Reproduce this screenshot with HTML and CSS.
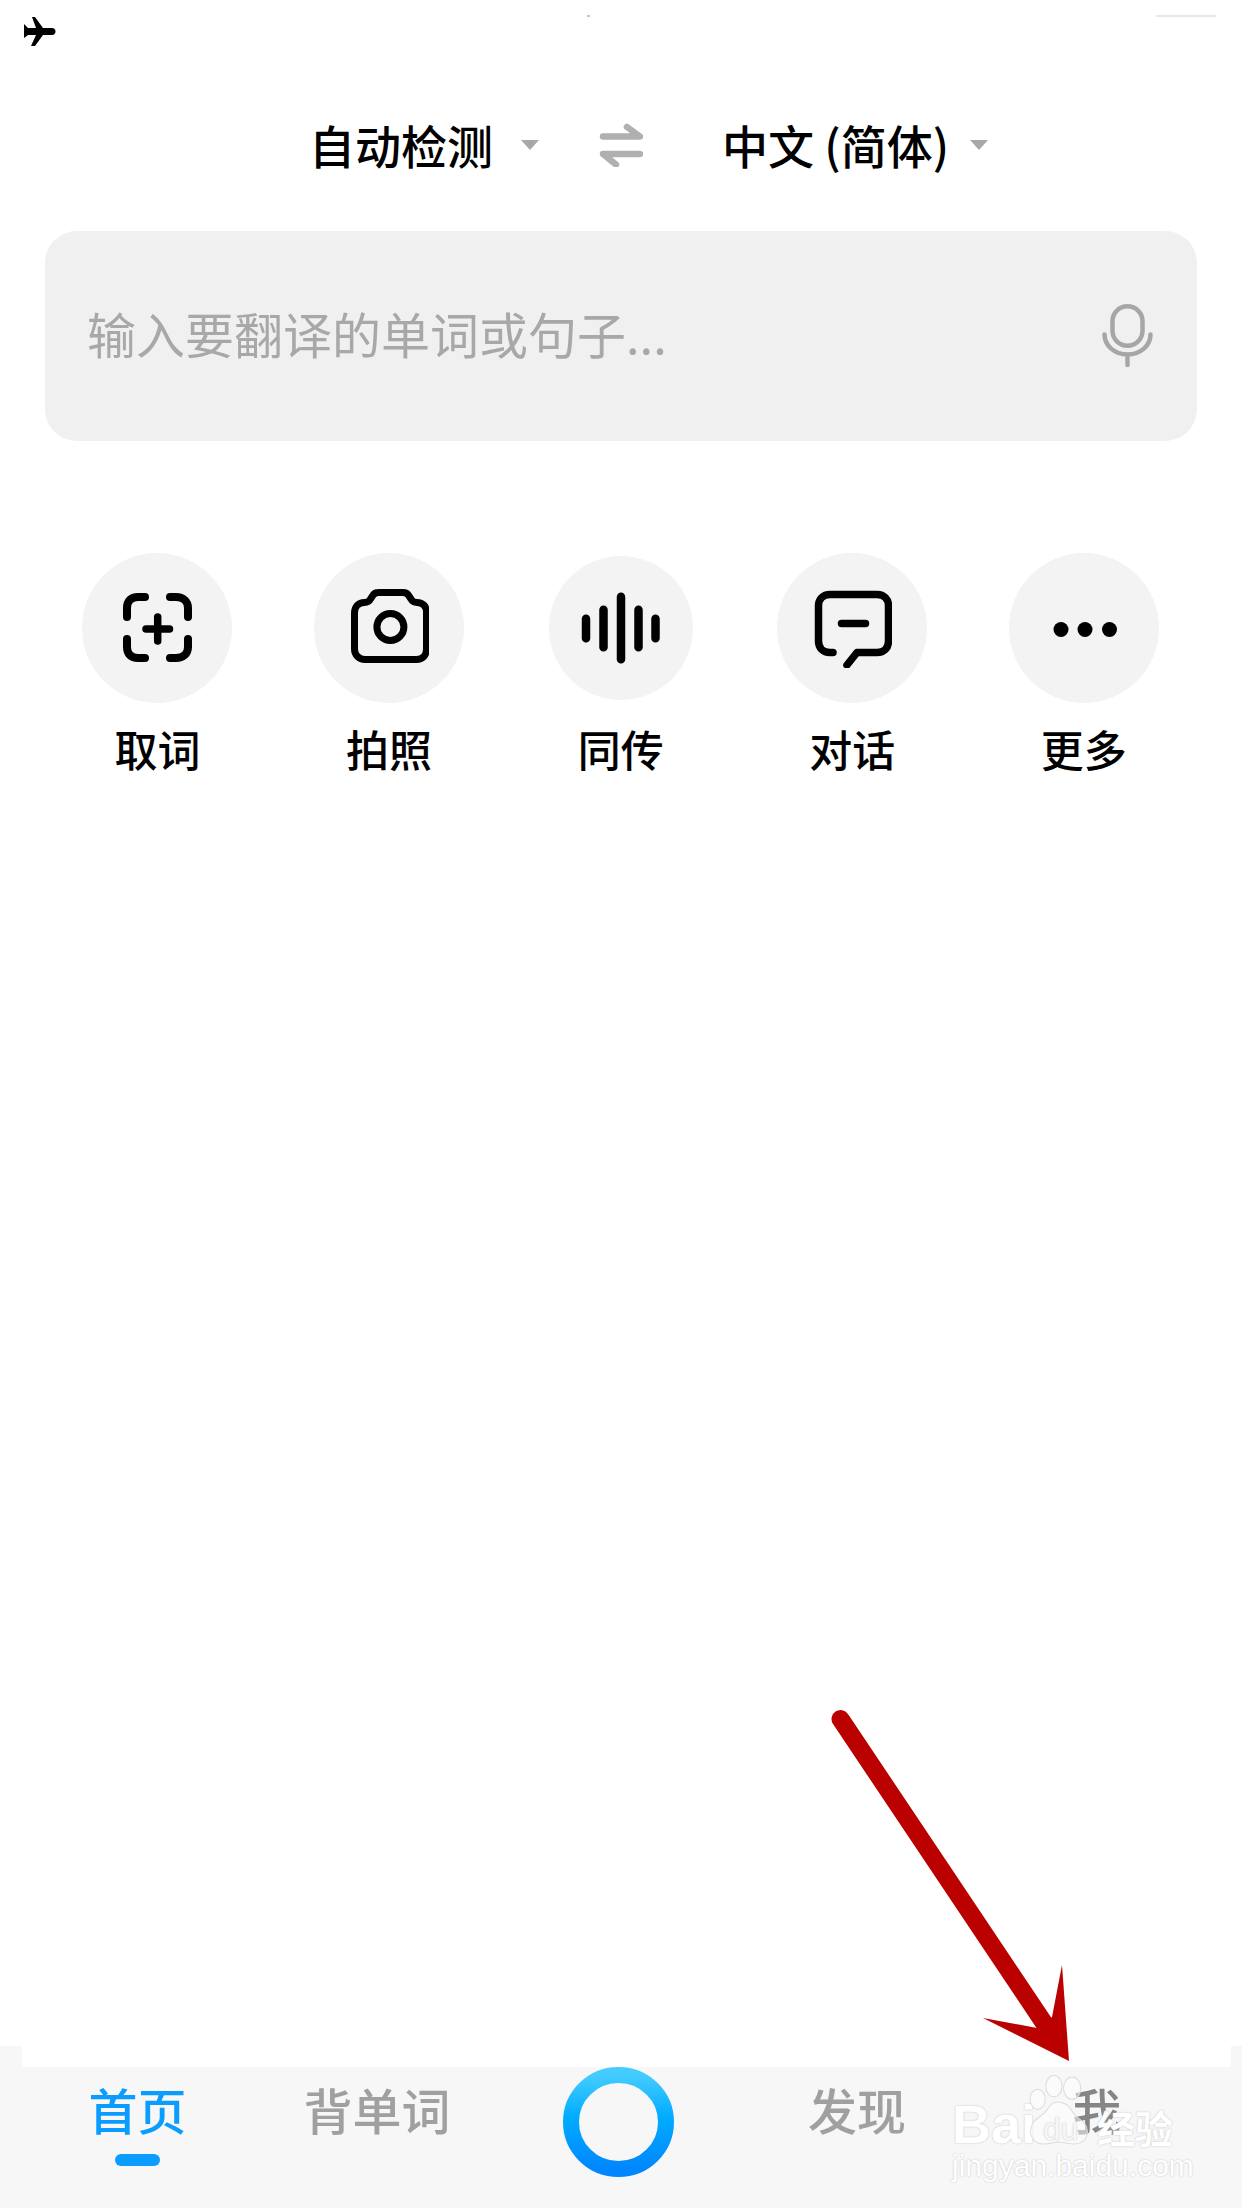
FILE: index.html
```html
<!DOCTYPE html>
<html lang="zh-CN">
<head>
    <meta charset="UTF-8">
    <title>翻译</title>
    <link rel="stylesheet" href="styles.css">
</head>
<body>
    <div class="phone">
        <div class="status-bar">
            <svg class="plane" viewBox="0 0 32 29"><path d="M8 0h3l8 11h9c2 0 3.500 1.500 3.500 3.500S30 18 28 18h-9L11 29H7l5-11H4l-4 3V7l4 4h8z"/></svg>
            <span class="status-tick"></span>
            <span class="status-line"></span>
        </div>

        <div class="lang-row">
            <span class="lang lang-from">自动检测</span>
            <span class="caret"></span>
            <svg class="swap" viewBox="0 0 44 44"><path d="M4 13.500H41L28 4M41 31H4l13 10.500" fill="none" stroke="#b0b0b0" stroke-width="6.500" stroke-linecap="round" stroke-linejoin="round"/></svg>
            <span class="lang lang-to">中文 (简体)</span>
            <span class="caret"></span>
        </div>

        <div class="search-box">
            <span class="placeholder">输入要翻译的单词或句子...</span>
            <svg class="mic" viewBox="0 0 52 63"><rect x="10.500" y="2.300" width="30" height="39.500" rx="15" fill="none" stroke="#a6a6a6" stroke-width="4.500"/><path d="M2.500 30.500c0 11 10 20 23 20s23-9 23-20M25.500 50.500v10.500" fill="none" stroke="#a6a6a6" stroke-width="4.500" stroke-linecap="round"/></svg>
        </div>

        <div class="tools">
            <div class="tool">
                <div class="tool-circle">
                    <svg class="tool-icon" viewBox="0 0 80 80"><path d="M28 9h-7C14 9 10 13 10 20v9M53 9h6c7 0 12 4 12 11v9M10 51v8c0 7 4 11 11 11h7M71 51v8c0 7-5 11-12 11h-6" fill="none" stroke="#000" stroke-width="8" stroke-linecap="round"/><path d="M29 41h23.500M40.700 29v24" fill="none" stroke="#000" stroke-width="7.500" stroke-linecap="round"/></svg>
                </div>
                <span class="tool-label">取词</span>
            </div>
            <div class="tool">
                <div class="tool-circle">
                    <svg class="tool-icon" viewBox="0 0 80 80"><path d="M29 4.500h25c3 0 5 1.500 6 3.500l2 3c1 2 3 3.500 6 3.500c6 0 9.500 4 9.500 10V61c0 6-4 10.500-10 10.500H16C10 71.500 5.500 67 5.500 61V25c0-6 4-10.500 10-10.500c3 0 5-1.500 6-3.500l2-3c1-2 3-3.500 6-3.500z" fill="none" stroke="#000" stroke-width="7"/><circle cx="41.400" cy="39" r="13.500" fill="none" stroke="#000" stroke-width="7"/></svg>
                </div>
                <span class="tool-label">拍照</span>
            </div>
            <div class="tool">
                <div class="tool-circle tool-circle-small">
                    <svg class="tool-icon" viewBox="0 0 80 80"><path d="M5 30.750v19.500M22.500 21.750v37.500M40 8.750v62.500M57.500 21.750v37.500M74.500 30.750v19.500" fill="none" stroke="#000" stroke-width="8.500" stroke-linecap="round"/></svg>
                </div>
                <span class="tool-label">同传</span>
            </div>
            <div class="tool">
                <div class="tool-circle">
                    <svg class="tool-icon" viewBox="0 0 80 80"><path d="M21 64.500h-3C11 64.500 6.500 60 6.500 53V18C6.500 11 11 6.500 18 6.500h47C72 6.500 76.500 11 76.500 18v35c0 7-4.500 11.500-11.500 11.500H45L35 77M29.500 35.500h24" fill="none" stroke="#000" stroke-width="7.500" stroke-linecap="round" stroke-linejoin="round"/></svg>
                </div>
                <span class="tool-label">对话</span>
            </div>
            <div class="tool">
                <div class="tool-circle">
                    <svg class="tool-icon" viewBox="0 0 80 80"><circle cx="17" cy="41.500" r="7.500"/><circle cx="41" cy="41.500" r="7.500"/><circle cx="65.500" cy="41.500" r="7.500"/></svg>
                </div>
                <span class="tool-label">更多</span>
            </div>
        </div>

        <div class="spacer"></div>

        <div class="tab-bar">
            <div class="tab-cover"></div>
            <div class="tabs">
                <div class="tab tab-active">首页<span class="tab-dash"></span></div>
                <div class="tab">背单词</div>
                <svg class="ring" viewBox="0 0 111 110">
                    <defs>
                        <linearGradient id="ringFill" x1="0" y1="0" x2="0" y2="1">
                            <stop offset="0" stop-color="#45ccff"/>
                            <stop offset="0.45" stop-color="#00acff"/>
                            <stop offset="1" stop-color="#0087ff"/>
                        </linearGradient>
                    </defs>
                    <ellipse cx="55.500" cy="55" rx="47.500" ry="47" fill="none" stroke="url(#ringFill)" stroke-width="16"/>
                </svg>
                <div class="tab">发现</div>
                <div class="tab tab-me">我</div>
            </div>
        </div>

        <!-- annotation arrow pasted over the screenshot -->
        <svg class="arrow" viewBox="0 0 1242 2208">
            <path d="M840.500 1719L1044 2023" fill="none" stroke="#bb0000" stroke-width="18" stroke-linecap="round"/>
            <path d="M1069 2061L1062 1965L1052 2017L1037 2028L983 2018z" fill="#bb0000"/>
        </svg>

        <!-- site watermark -->
        <div class="watermark">
            <div class="wm-top">
                <span class="wm-bai">Bai</span>
                <svg class="wm-paw" viewBox="0 0 60 70"><g fill="#fff" fill-opacity="0.5" stroke="#dcdcdc" stroke-width="1"><ellipse cx="8" cy="24" rx="7.500" ry="10"/><ellipse cx="24" cy="11" rx="8" ry="10.500"/><ellipse cx="42" cy="13" rx="8.500" ry="11"/><path d="M1 55c0-12 12-13 17-22 3-5 8-7 13-6 8 1 10 9 15 14 5 4 11 7 11 15 0 8-6 12-13 12-6 0-10-2-15-2s-9 2-15 2C6 68 1 63 1 55z"/></g></svg>
                <span class="wm-du">du</span>
                <span class="wm-cn">经验</span>
            </div>
            <div class="wm-url">jingyan.baidu.com</div>
        </div>
    </div>
</body>
</html>
```

FILE: styles.css
```css
html, body {
    margin: 0;
    padding: 0;
}
body {
    width: 1242px;
    height: 2208px;
    background: white;
    overflow: hidden;
    font-family: "Noto Sans CJK SC", "Noto Sans", sans-serif;
}
.phone {
    position: relative;
    width: 1242px;
    height: 2208px;
    display: flex;
    flex-direction: column;
}

/* status bar leftovers */
.status-bar {
    height: 104px;
    padding: 17px 26px 0 24px;
    box-sizing: border-box;
    display: flex;
    align-items: flex-start;
}
.plane {
    width: 32px;
    height: 29px;
}
.status-tick {
    width: 3px;
    height: 2px;
    margin: -2px 0 0 531px;
    background: #c4c4c4;
}
.status-line {
    width: 60px;
    height: 2px;
    margin: -2px 0 0 auto;
    background: #e8e8e8;
}

/* language picker */
.lang-row {
    height: 82px;
    display: flex;
    align-items: center;
    padding-left: 309px;
}
.lang {
    font-size: 46px;
    font-weight: 500;
    color: black;
    line-height: 82px;
    white-space: nowrap;
    margin-bottom: 3px;
}
.lang-from {
    width: 188px;
}
.lang-to {
    width: 224px;
    margin-left: 79px;
}
.caret {
    width: 0;
    height: 0;
    margin-left: 24px;
    border-left: 9px solid transparent;
    border-right: 9px solid transparent;
    border-top: 10px solid #a8a8a8;
}
.swap {
    width: 44px;
    height: 44px;
    margin-left: 60px;
}

/* input */
.search-box {
    height: 210px;
    margin: 45px 45px 0;
    padding: 0 43px 0 42px;
    border-radius: 32px;
    background: #f0f0f0;
    display: flex;
    align-items: center;
    justify-content: space-between;
}
.placeholder {
    font-size: 49px;
    color: #a8a8a8;
    margin-bottom: 8px;
}
.mic {
    width: 52px;
    height: 63px;
    margin-top: -1px;
}

/* tool buttons */
.tools {
    display: grid;
    grid-template-columns: repeat(5, 231.6px);
    margin-top: 112px;
    padding-left: 41.7px;
}
.tool {
    display: flex;
    flex-direction: column;
    align-items: center;
}
.tool-circle {
    width: 150px;
    height: 150px;
    margin-bottom: 15px;
    border-radius: 50%;
    background: #f3f3f3;
    display: flex;
    align-items: center;
    justify-content: center;
}
.tool-circle-small {
    width: 144px;
    height: 144px;
    margin: 3px 0 18px;
}
.tool-icon {
    width: 80px;
    height: 80px;
}
.tool-label {
    font-size: 43px;
    font-weight: 500;
    line-height: 60px;
    color: black;
}

.spacer {
    flex: 1;
}

/* bottom tabs */
.tab-bar {
    position: relative;
    height: 162px;
    background: #f7f7f7;
}
.tab-cover {
    position: absolute;
    top: 0;
    left: 22px;
    width: 1209px;
    height: 21px;
    background: white;
}
.tabs {
    position: relative;
    display: grid;
    grid-template-columns: 275px 204px 277px 202px 1fr;
    padding-top: 21px;
}
.tab {
    font-size: 49px;
    font-weight: 500;
    line-height: 48px;
    padding-top: 18px;
    color: #a0a0a0;
    text-align: center;
    display: flex;
    flex-direction: column;
    align-items: center;
}
.tab-active {
    color: #0a9dff;
}
.tab-dash {
    width: 45px;
    height: 12px;
    margin-top: 21px;
    border-radius: 6px;
    background: #0a9dff;
}
.tab-me {
    color: #858585;
    padding-right: 6px;
}
.ring {
    width: 111px;
    height: 110px;
    justify-self: center;
    margin-left: 2px;
}

/* overlays */
.arrow {
    position: absolute;
    top: 0;
    left: 0;
    width: 1242px;
    height: 2208px;
}
.watermark {
    position: absolute;
    top: 2075px;
    left: 952px;
    width: 230px;
    color: white;
    text-shadow: 0 0 2px #bdbdbd;
}
.wm-top {
    position: relative;
    height: 76px;
}
.wm-bai {
    position: absolute;
    left: 0;
    top: 22px;
    font-family: "Liberation Sans", sans-serif;
    font-size: 54px;
    font-weight: bold;
    line-height: 54px;
}
.wm-paw {
    position: absolute;
    left: 77px;
    top: 0;
    width: 62px;
    height: 71px;
}
.wm-du {
    position: absolute;
    left: 91px;
    top: 38px;
    font-family: "Liberation Sans", sans-serif;
    font-size: 32px;
    line-height: 32px;
    color: #f7f7f7;
}
.wm-cn {
    position: absolute;
    left: 145px;
    top: 30px;
    font-size: 38px;
    font-weight: 700;
    line-height: 44px;
    white-space: nowrap;
}
.wm-url {
    font-family: "Liberation Sans", sans-serif;
    font-size: 30px;
    line-height: 30px;
    white-space: nowrap;
}
```
